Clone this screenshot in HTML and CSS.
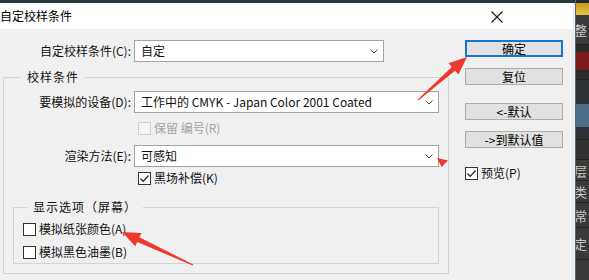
FILE: index.html
```html
<!DOCTYPE html>
<html lang="zh-CN">
<head>
<meta charset="utf-8">
<title>自定校样条件</title>
<link rel="stylesheet" href="styles.css">
</head>
<body>
<div class="screen">
  <div class="main">
    <div class="topstrip"></div>
    <div class="dialog">
      <div class="titlebar">
        <span class="title">自定校样条件</span>
        <svg class="close" width="12" height="12" viewBox="0 0 12 12"><path d="M0.5 0.5 L11.5 11.5 M11.5 0.5 L0.5 11.5" stroke="#1a1a1a" stroke-width="1.1" fill="none"/></svg>
      </div>
      <div class="body">
        <div class="left">
          <div class="row">
            <span class="lbl lbl-top">自定校样条件(C):</span>
            <div class="combo combo-preset"><span>自定</span><svg class="chev" width="8" height="5" viewBox="0 0 8 5"><polyline points="0.5,0.5 4,4 7.5,0.5" fill="none" stroke="#444" stroke-width="1"/></svg></div>
          </div>
          <div class="group outer">
            <span class="legend">校样条件</span>
            <div class="row row-device">
              <span class="lbl lbl-in">要模拟的设备(D):</span>
              <div class="combo combo-wide"><span>工作中的 CMYK - Japan Color 2001 Coated</span><svg class="chev" width="8" height="5" viewBox="0 0 8 5"><polyline points="0.5,0.5 4,4 7.5,0.5" fill="none" stroke="#444" stroke-width="1"/></svg></div>
            </div>
            <div class="checkrow check-sub disabled"><span class="box"></span><span>保留 编号(R)</span></div>
            <div class="row row-render">
              <span class="lbl lbl-in">渲染方法(E):</span>
              <div class="combo combo-wide"><span>可感知</span><svg class="chev" width="8" height="5" viewBox="0 0 8 5"><polyline points="0.5,0.5 4,4 7.5,0.5" fill="none" stroke="#444" stroke-width="1"/></svg></div>
            </div>
            <div class="checkrow check-sub check-bpc"><span class="box"><svg width="11" height="11" viewBox="0 0 11 11"><polyline points="1.5,5.5 4.2,8.3 9.5,2.5" fill="none" stroke="#222" stroke-width="1.2"/></svg></span><span>黑场补偿(K)</span></div>
            <div class="group inner">
              <span class="legend legend-inner">显示选项（屏幕）</span>
              <div class="checkrow check-inner first"><span class="box"></span><span>模拟纸张颜色(A)</span></div>
              <div class="checkrow check-inner second"><span class="box"></span><span>模拟黑色油墨(B)</span></div>
            </div>
          </div>
        </div>
        <div class="right">
          <div class="btn default">确定</div>
          <div class="btn gap-s">复位</div>
          <div class="btn gap-l">&lt;-默认</div>
          <div class="btn gap-s">-&gt;到默认值</div>
          <div class="checkrow preview"><span class="box"><svg width="11" height="11" viewBox="0 0 11 11"><polyline points="1.5,5.5 4.2,8.3 9.5,2.5" fill="none" stroke="#222" stroke-width="1.2"/></svg></span><span>预览(P)</span></div>
        </div>
      </div>
    </div>
  </div>
  <div class="side">
    <div class="side-top"></div>
    <div class="side-cell c1">整</div>
    <div class="side-pic red"></div>
    <div class="side-pic blue"></div>
    <div class="side-gap"></div>
    <div class="side-cell c2">层</div>
    <div class="side-cell c3">类</div>
    <div class="side-cell c4">常</div>
    <div class="side-cell c5">定</div>
  </div>
</div>
<svg class="arrows" width="589" height="280" viewBox="0 0 589 280">
  <polygon fill="#ee3a2e" points="418.3,100.4 455.0,70.7 458.5,74.5 467,57 448.4,63.2 451.8,66.9 417.7,99.6"/>
  <polygon fill="#ee3a2e" points="193.3,264.4 139.4,237.3 141.5,233.0 122,232 135.2,246.3 137.2,241.9 192.7,265.6"/>
  <polygon fill="#ee3a2e" points="437,158 448,160.5 441.5,167"/>
</svg>
</body>
</html>
```
FILE: styles.css
```css
* { box-sizing: border-box; }
body {
  margin: 0;
  width: 589px;
  height: 280px;
  overflow: hidden;
  position: relative;
  font-family: "Noto Sans CJK SC", "Noto Sans", sans-serif;
  font-size: 12px;
  color: #111;
  background: #333;
}
.screen { display: flex; height: 280px; }
.main { width: 575px; display: flex; flex-direction: column; }
.topstrip { height: 3px; background: #23363a; }
.dialog {
  flex: 1;
  display: flex;
  flex-direction: column;
  background: #f0f0f0;
  border-right: 2px solid #e6eef4;
}
.titlebar {
  height: 26px;
  background: #fff;
  display: flex;
  align-items: center;
  justify-content: space-between;
}
.title { margin-left: 0; line-height: 16px; color: #000; }
.close { margin-right: 70px; margin-top: 1px; }
.body { display: flex; gap: 16px; align-items: flex-start; }
.left { width: 449px; padding-top: 11px; }
.row { display: flex; align-items: center; gap: 3px; height: 22px; }
.lbl { text-align: right; line-height: 16px; }
.lbl-top { width: 131px; }
.lbl-in { width: 127px; }
.combo {
  height: 22px;
  background: #fff;
  border: 1px solid #a3a3a3;
  display: flex;
  align-items: center;
  justify-content: space-between;
  padding: 0 5px 0 6px;
  line-height: 16px;
  white-space: nowrap;
}
.combo-preset { width: 250px; }
.combo-wide { width: 305px; }
.chev { flex: none; margin-top: 1px; }
.group { border: 1px solid #d3d3d3; }
.outer { margin: 15px 0 0 3px; width: 446px; padding-bottom: 9px; }
.legend {
  display: block;
  width: max-content;
  margin: -9px 0 0 17px;
  padding: 0 6px;
  background: #f0f0f0;
  line-height: 16px;
  letter-spacing: 1px;
}
.row-device { margin-top: 6px; }
.checkrow { display: flex; align-items: center; height: 16px; gap: 3px; line-height: 16px; }
.box {
  width: 13px;
  height: 13px;
  border: 1px solid #333;
  background: #fff;
  display: flex;
  align-items: center;
  justify-content: center;
  flex: none;
}
.check-sub { margin-left: 134px; margin-top: 7px; }
.disabled { color: #a3a3a3; }
.disabled .box { border-color: #cfcfcf; background: #f4f4f4; }
.row-render { margin-top: 9px; }
.check-bpc { margin-top: 3px; }
.inner { margin: 21px 9px 0 9px; padding-bottom: 3px; }
.legend-inner { margin-left: 13px; }
.check-inner { margin-left: 9px; }
.check-inner.first { margin-top: 6px; }
.check-inner.second { margin-top: 7px; }
.right { width: 98px; padding-top: 11px; display: flex; flex-direction: column; }
.btn {
  height: 17px;
  border: 1px solid #adadad;
  background: #e1e1e1;
  display: flex;
  align-items: center;
  justify-content: center;
  line-height: 15px;
  color: #000;
}
.btn.default { border: 2px solid #1677cf; }
.gap-s { margin-top: 11px; }
.gap-l { margin-top: 18px; }
.preview { margin-top: 17px; }
.side {
  width: 14px;
  display: flex;
  flex-direction: column;
  background: #3a3a3a;
  overflow: hidden;
  border-left: 1px solid #5a6670;
}
.side-top { height: 15px; flex: none; background: linear-gradient(#1f2a2a 0 3px, #c99a1d 3px, #e7c24a); }
.side-cell {
  flex: none;
  color: #c8c8c8;
  font-size: 13px;
  margin-left: -2px;
  border-bottom: 1px solid #222;
  display: flex;
  align-items: center;
}
.c1 { height: 30px; }
.c2 { height: 21px; }
.c3 { height: 22px; }
.c4 { height: 25px; }
.c5 { height: 32px; }
.side-pic { flex: none; border-bottom: 1px solid #222; }
.side-pic.red { height: 35px; background: linear-gradient(#2b2b2b 0 20%, #7a1c1c 20% 75%, #2b2b2b 75%); }
.side-pic.blue { height: 60px; background: linear-gradient(#2e3338 0 40%, #4b6e8a 40% 80%, #2e3338 80%); }
.side-gap { height: 20px; flex: none; background: #333; border-bottom: 1px solid #222; }
.arrows { position: absolute; left: 0; top: 0; pointer-events: none; }
```
